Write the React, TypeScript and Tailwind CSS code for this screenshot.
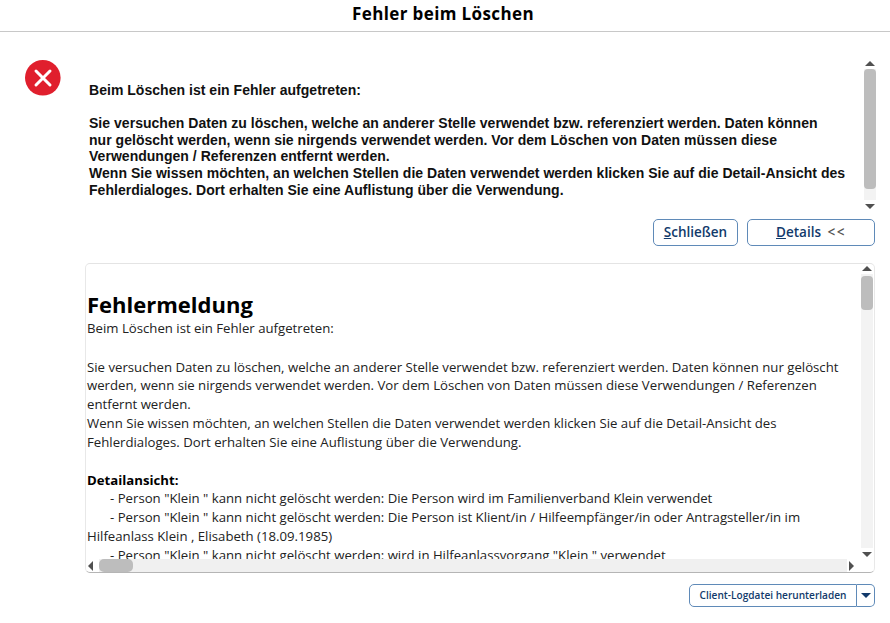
const UP = 'border-x-[5px] border-b-[5px] border-x-transparent border-b-[#505050]';
const DOWN = 'border-x-[5px] border-t-[5px] border-x-transparent border-t-[#505050]';

function VerticalScrollbar({ thumb }: { thumb: string }) {
  return (
    <div className="flex h-full w-[12px] shrink-0 flex-col items-center">
      <div className={`mt-[2px] h-0 w-0 ${UP}`} />
      <div className="mt-[3px] w-full flex-1 bg-[#f3f3f3]">
        <div className={`w-full rounded-[4px] bg-[#bdbdbd] ${thumb}`} />
      </div>
      <div className={`mb-[2px] mt-[4px] h-0 w-0 ${DOWN}`} />
    </div>
  );
}

export default function App() {
  return (
    <div
      className="flex h-[623px] w-[890px] flex-col overflow-hidden bg-white text-black"
      style={{ fontFamily: '"Open Sans", sans-serif' }}
    >
      <header className="flex h-[32px] shrink-0 items-center justify-center border-b border-[#c8c8c8] pb-[3px] pr-[4px] text-[17px] font-bold tracking-[0.38px]">
        Fehler beim Löschen
      </header>

      <div className="flex flex-1 flex-col pl-[25px] pr-[14px]">
        <section className="mt-[27px] flex h-[152px] shrink-0">
          <div className="mt-[1px] h-[36px] w-[64px] shrink-0">
            <svg width="36" height="36" viewBox="0 0 36 36">
              <circle cx="17.8" cy="17.8" r="17.8" fill="#e01f2d" />
              <path d="M11 11 L25 25 M25 11 L11 25" stroke="#fff" strokeWidth="3" strokeLinecap="round" />
            </svg>
          </div>
          <div
            className="flex-1 whitespace-nowrap pt-[23px] text-[14px] font-bold leading-[16.6px] tracking-[0.03px] text-[#111]"
            style={{ fontFamily: '"Liberation Sans", Arial, sans-serif' }}
          >
            <p>Beim Löschen ist ein Fehler aufgetreten:</p>
            <br />
            <p>
              Sie versuchen Daten zu löschen, welche an anderer Stelle verwendet bzw. referenziert werden. Daten können
              <br />
              nur gelöscht werden, wenn sie nirgends verwendet werden. Vor dem Löschen von Daten müssen diese
              <br />
              Verwendungen / Referenzen entfernt werden.
              <br />
              Wenn Sie wissen möchten, an welchen Stellen die Daten verwendet werden klicken Sie auf die Detail-Ansicht des
              <br />
              Fehlerdialoges. Dort erhalten Sie eine Auflistung über die Verwendung.
            </p>
          </div>
          <VerticalScrollbar thumb="h-[120px]" />
        </section>

        <div className="mr-[1px] mt-[8px] flex shrink-0 justify-end gap-[9px] text-[13.5px] font-semibold text-[#123a6b]">
          <button className="h-[27px] w-[85px] rounded-[5px] border-[1.5px] border-[#5f8ab8]">
            <span className="underline">S</span>chließen
          </button>
          <button className="h-[27px] w-[128px] rounded-[5px] border-[1.5px] border-[#5f8ab8]">
            <span className="underline">D</span>etails{' '}
            <span className="ml-[3px] tracking-[1.5px] text-[#555]">&lt;&lt;</span>
          </button>
        </div>

        <section className="ml-[60px] mr-[1px] mt-[17px] flex h-[310px] shrink-0 flex-col overflow-hidden rounded-[5px] border border-t-[#e4e4e4] border-x-[#e8e8e8] border-b-[#b5b5b5]">
          <div className="flex min-h-0 flex-1">
            <div className="flex-1 overflow-hidden whitespace-nowrap pl-[1px] pr-[4px] pt-[25px] text-[13.2px] leading-[18.83px] text-[#222]">
              <h1 className="text-[22px] font-bold leading-[30px] text-black">Fehlermeldung</h1>
              <p>Beim Löschen ist ein Fehler aufgetreten:</p>
              <br />
              <p className="mt-[1px]">
                Sie versuchen Daten zu löschen, welche an anderer Stelle verwendet bzw. referenziert werden. Daten können nur gelöscht
                <br />
                werden, wenn sie nirgends verwendet werden. Vor dem Löschen von Daten müssen diese Verwendungen / Referenzen
                <br />
                entfernt werden.
                <br />
                Wenn Sie wissen möchten, an welchen Stellen die Daten verwendet werden klicken Sie auf die Detail-Ansicht des
                <br />
                Fehlerdialoges. Dort erhalten Sie eine Auflistung über die Verwendung.
              </p>
              <br />
              <p className="font-bold text-black">Detailansicht:</p>
              <p className="indent-[23px]">- Person "Klein " kann nicht gelöscht werden: Die Person wird im Familienverband Klein verwendet</p>
              <p className="indent-[23px]">
                - Person "Klein " kann nicht gelöscht werden: Die Person ist Klient/in / Hilfeempfänger/in oder Antragsteller/in im
                <br />
                Hilfeanlass Klein , Elisabeth (18.09.1985)
              </p>
              <p className="indent-[23px]">- Person "Klein " kann nicht gelöscht werden: wird in Hilfeanlassvorgang "Klein " verwendet</p>
            </div>
            <div className="mr-[1px]">
              <VerticalScrollbar thumb="mt-[2px] h-[34px]" />
            </div>
          </div>
          <div className="flex h-[13px] shrink-0 items-center">
            <div className="ml-[2px] h-0 w-0 border-y-[5px] border-r-[5px] border-y-transparent border-r-[#505050]" />
            <div className="ml-[6px] h-full flex-1 bg-[#f0f0f0]">
              <div className="h-full w-[34px] rounded-[5px] bg-[#bdbdbd]" />
            </div>
            <div className="ml-[2px] mr-[20px] h-0 w-0 border-y-[5px] border-l-[5px] border-y-transparent border-l-[#505050]" />
          </div>
        </section>

        <div className="mr-[1px] mt-[11px] flex shrink-0 justify-end text-[10.1px] font-semibold text-[#123a6b]">
          <button className="h-[23px] w-[168px] rounded-l-[5px] border-[1.5px] border-[#5f8ab8]">Client-Logdatei herunterladen</button>
          <button className="flex h-[23px] w-[18px] items-center justify-center rounded-r-[5px] border-[1.5px] border-l-0 border-[#5f8ab8]">
            <span className="h-0 w-0 border-x-[5px] border-t-[5px] border-x-transparent border-t-[#123a6b]" />
          </button>
        </div>
      </div>
    </div>
  );
}
